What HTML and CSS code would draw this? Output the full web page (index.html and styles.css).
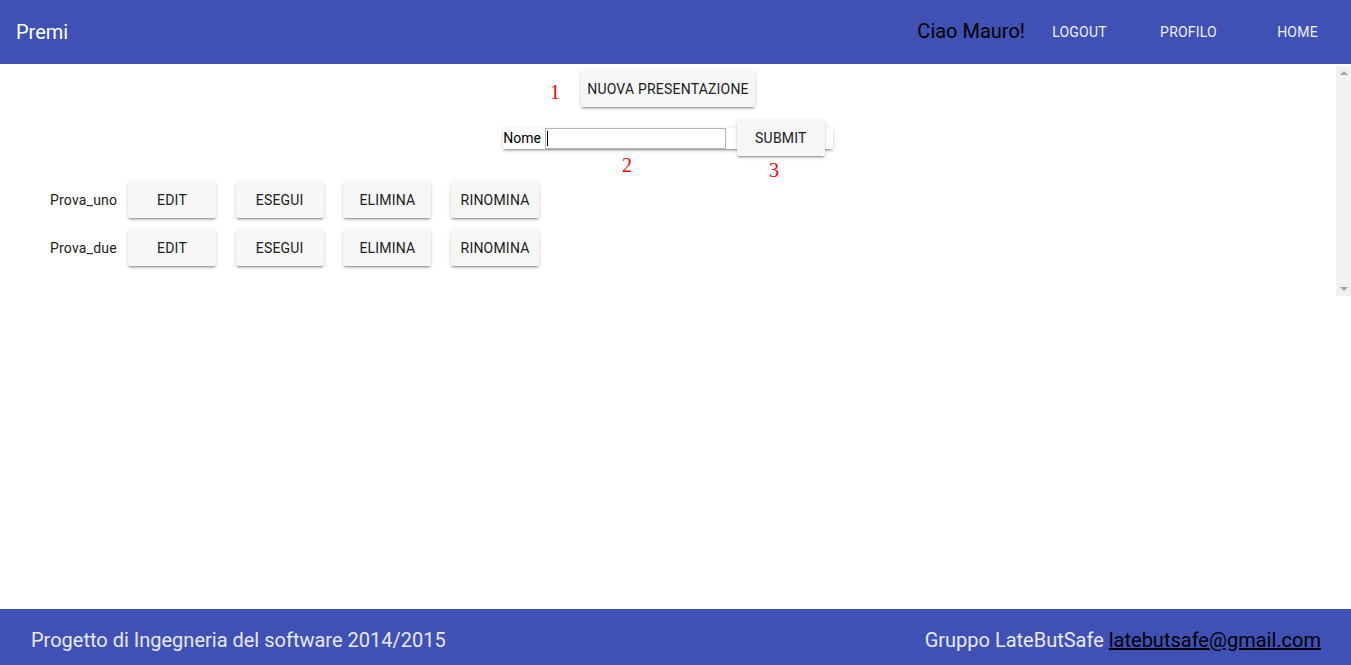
FILE: index.html
```html
<!DOCTYPE html>
<html lang="it">
<head>
<meta charset="utf-8">
<title>Premi</title>
<link rel="stylesheet" href="styles.css">
</head>
<body>
<div class="page">
  <header class="topbar">
    <span class="title">Premi</span>
    <span class="spacer"></span>
    <span class="greeting">Ciao Mauro!</span>
    <nav class="nav">
      <a class="nav-link" href="#">Logout</a>
      <a class="nav-link" href="#">Profilo</a>
      <a class="nav-link" href="#">Home</a>
    </nav>
  </header>

  <div class="pane">
    <div class="pane-content">
      <div class="row-center">
        <button class="btn btn-wide">Nuova presentazione</button>
      </div>
      <div class="row-center form-row">
        <form class="new-form">
          <label class="form-label">Nome</label>
          <span class="input-wrap"><input class="text-input" type="text"><span class="caret"></span></span>
          <button class="btn" type="button">Submit</button>
        </form>
      </div>
      <div class="list">
        <div class="item">
          <span class="item-name">Prova_uno</span>
          <button class="btn">Edit</button>
          <button class="btn">Esegui</button>
          <button class="btn">Elimina</button>
          <button class="btn">Rinomina</button>
        </div>
        <div class="item">
          <span class="item-name">Prova_due</span>
          <button class="btn">Edit</button>
          <button class="btn">Esegui</button>
          <button class="btn">Elimina</button>
          <button class="btn">Rinomina</button>
        </div>
      </div>
      <span class="mark mark-1">1</span>
      <span class="mark mark-2">2</span>
      <span class="mark mark-3">3</span>
    </div>
    <div class="scrollbar">
      <span class="arrow arrow-up"></span>
      <span class="arrow arrow-down"></span>
    </div>
  </div>

  <div class="filler"></div>

  <footer class="footer">
    <span>Progetto di Ingegneria del software 2014/2015</span>
    <span>Gruppo LateButSafe <a class="mail" href="#">latebutsafe@gmail.com</a></span>
  </footer>
</div>
</body>
</html>
```

FILE: styles.css
```css
html, body {
  margin: 0;
  padding: 0;
  height: 100%;
  background: #ffffff;
  font-family: Roboto, "Liberation Sans", sans-serif;
  overflow: hidden;
}

.page {
  display: flex;
  flex-direction: column;
  height: 665px;
}

.topbar {
  height: 64px;
  flex: none;
  background: #3f51b5;
  display: flex;
  align-items: center;
  padding-left: 16px;
  box-sizing: border-box;
}

.title {
  color: #ffffff;
  font-size: 20px;
  line-height: 24px;
}

.spacer {
  flex: 1;
}

.greeting {
  color: #000000;
  font-size: 20px;
  line-height: 24px;
  margin-top: -2px;
  margin-right: 0;
}

.nav {
  display: flex;
  margin-right: -1px;
}

.nav-link {
  width: 109px;
  text-align: center;
  color: #f0f0fa;
  text-decoration: none;
  text-transform: uppercase;
  font-size: 14px;
  line-height: 24px;
  font-weight: 400;
  letter-spacing: 0.2px;
}

.pane {
  margin-top: 2px;
  height: 230px;
  flex: none;
  display: flex;
}

.pane-content {
  flex: 1;
  position: relative;
  padding-top: 5px;
}

.scrollbar {
  width: 15px;
  background: #f1f1f1;
  display: flex;
  flex-direction: column;
  justify-content: space-between;
  align-items: center;
  padding: 5px 0;
  box-sizing: border-box;
}

.arrow {
  width: 0;
  height: 0;
  border-left: 4px solid transparent;
  border-right: 4px solid transparent;
}

.arrow-up {
  border-bottom: 4px solid #a3a3a3;
}

.arrow-down {
  border-top: 4px solid #a3a3a3;
}

.row-center {
  display: flex;
  justify-content: center;
}

.btn {
  font-family: Roboto, "Liberation Sans", sans-serif;
  font-size: 14px;
  font-weight: 400;
  letter-spacing: 0.2px;
  text-transform: uppercase;
  color: #212121;
  background: #f7f7f7;
  border: none;
  border-radius: 2px;
  height: 36px;
  min-width: 88px;
  padding: 0 6px;
  box-shadow: 0 2px 2px 0 rgba(0,0,0,.14), 0 3px 1px -2px rgba(0,0,0,.2), 0 1px 5px 0 rgba(0,0,0,.12);
  cursor: pointer;
}

.btn-wide {
  width: 174px;
}

.form-row {
  margin-top: 13px;
  height: 36px;
  align-items: center;
}

.new-form {
  display: flex;
  align-items: center;
  height: 21px;
  margin: 0;
  background: #ffffff;
  box-shadow: 0 2px 2px 0 rgba(0,0,0,.14), 0 3px 1px -2px rgba(0,0,0,.2), 0 1px 5px 0 rgba(0,0,0,.12);
  padding-right: 8px;
}

.form-label {
  font-size: 14px;
  color: #000000;
  margin-right: 4px;
}

.input-wrap {
  position: relative;
  display: flex;
}

.text-input {
  width: 181px;
  height: 21px;
  box-sizing: border-box;
  border: 1px solid #b4b4b4;
  padding: 1px 2px;
  margin: 0;
  font-family: Roboto, "Liberation Sans", sans-serif;
  font-size: 13px;
  outline: none;
}

.caret {
  position: absolute;
  left: 2px;
  top: 3px;
  width: 1px;
  height: 15px;
  background: #000000;
}

.new-form .btn {
  margin-left: 11px;
}

.list {
  margin-top: 26px;
  padding-left: 50px;
  display: flex;
  flex-direction: column;
  gap: 12px;
}

.item {
  display: flex;
  align-items: center;
  gap: 19.7px;
}

.item-name {
  font-size: 14px;
  letter-spacing: 0.2px;
  color: #212121;
  width: 67px;
  margin-right: -8.7px;
}

.mark {
  position: absolute;
  color: #ff0000;
  font-family: "Liberation Serif", serif;
  font-size: 20px;
  line-height: 20px;
}

.mark-1 { left: 550px; top: 16px; }
.mark-2 { left: 622px; top: 89px; }
.mark-3 { left: 769px; top: 94px; }

.filler {
  flex: 1;
}

.footer {
  height: 56px;
  flex: none;
  background: #3f51b5;
  display: flex;
  justify-content: space-between;
  align-items: center;
  padding: 6px 30px 0 31px;
  box-sizing: border-box;
  color: #e8e8f8;
  font-size: 20px;
}

.mail {
  color: #000000;
  text-decoration: underline;
}
```
